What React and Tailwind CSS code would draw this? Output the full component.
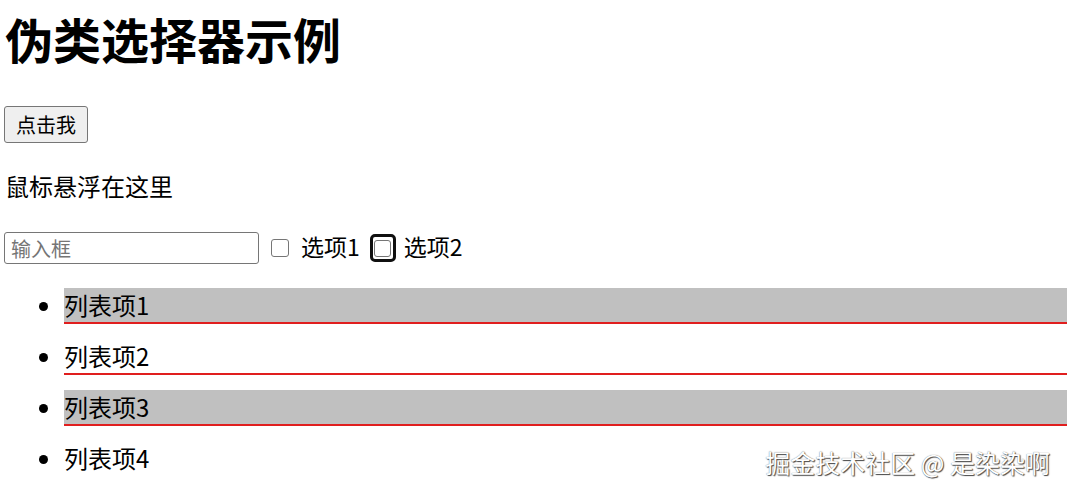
export default function App() {
  const items = ["列表项1", "列表项2", "列表项3", "列表项4"];

  return (
    <div
      className="relative min-h-[492px] bg-white pl-[4px] text-black"
      style={{ fontFamily: '"Noto Sans CJK SC", "Noto Sans", sans-serif' }}
    >
      <h1 className="pt-[14px] pl-[1px] text-[48px] font-bold leading-[48px]">伪类选择器示例</h1>

      <button className="mt-[44px] h-[37px] w-[84px] rounded-[3px] border border-[#767676] bg-[#efefef] text-[20px] leading-none">
        点击我
      </button>

      <p className="mt-[31px] pl-[1px] text-[24px] leading-[24px]">鼠标悬浮在这里</p>

      <div className="mt-[34px] flex h-[32px] items-center">
        <input
          type="text"
          placeholder="输入框"
          className="h-[32px] w-[255px] rounded-[3px] border border-[#767676] px-[6px] text-[20px] placeholder:text-[#757575] outline-none"
        />
        <span className="ml-[12px] h-[18px] w-[18px] rounded-[3px] border border-[#767676] bg-white"></span>
        <span className="ml-[12px] -mt-[3px] text-[23px] leading-none">选项1</span>
        <span className="ml-[10px] flex h-[28px] w-[26px] items-center justify-center rounded-[5px] border-[3px] border-[#101010]">
          <span className="h-[17px] w-[17px] rounded-[3px] border border-[#767676] bg-white"></span>
        </span>
        <span className="ml-[8px] -mt-[3px] text-[23px] leading-none">选项2</span>
      </div>

      <ul className="mt-[24px] list-disc pl-[60px]">
        {items.map((t, i) => (
          <li
            key={t}
            className={
              "mb-[15px] h-[36px] text-[24px] leading-[34px] marker:text-black " +
              (i < 3 ? "border-b-2 border-[#e01e1e] " : "") +
              (i % 2 === 0 ? "bg-[#c0c0c0]" : "")
            }
          >
            {t}
          </li>
        ))}
      </ul>

      <div
        className="absolute right-[17px] bottom-[17px] text-[25px] leading-none text-white"
        style={{ textShadow: "1px 1px 1px #444, 0 0 1px #666" }}
      >
        掘金技术社区 @ 是染染啊
      </div>
    </div>
  );
}
